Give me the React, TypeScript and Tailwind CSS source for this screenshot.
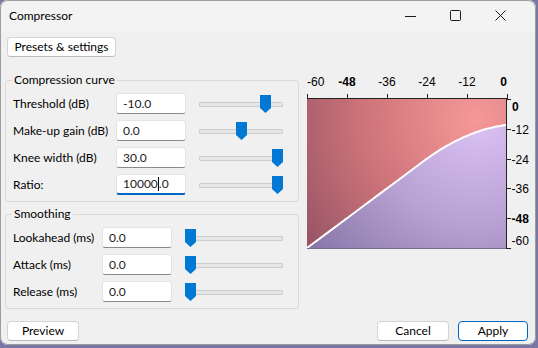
import React from "react"

const curveRows = [
  { label: "Threshold (dB)", value: "-10.0", pos: 0.84 },
  { label: "Make-up gain (dB)", value: "0.0", pos: 0.51 },
  { label: "Knee width (dB)", value: "30.0", pos: 1 },
  { label: "Ratio:", value: "10000.0", pos: 1, focused: true },
]

const smoothingRows = [
  { label: "Lookahead (ms)", value: "0.0", pos: 0 },
  { label: "Attack (ms)", value: "0.0", pos: 0 },
  { label: "Release (ms)", value: "0.0", pos: 0 },
]

// plot mapping, svg origin sits at window (300, 72)
const toX = (db: number) => 7 + ((db + 60) * 200) / 60
const toY = (db: number) => 27 + (-db * 149) / 60

function outDb(x: number) {
  const t = -10
  const w = 30
  if (x < t - w / 2) return x
  return x - (x - t + w / 2) ** 2 / (2 * w)
}

const curve: [number, number][] = []
for (let d = -60; d <= 0.001; d += 0.5) curve.push([toX(d), toY(outDb(d))])

function Thumb() {
  return (
    <svg width="11" height="18" viewBox="0 0 11 18">
      <polygon points="0,0 11,0 11,13 5.5,18 0,13" fill="#0078d4" />
    </svg>
  )
}

function Slider({ pos, width }: { pos: number; width: number }) {
  return (
    <div className="relative h-[21px] ml-[13px]" style={{ width }}>
      <div className="absolute left-0 right-0 top-[9px] h-[5px] border border-[#cdcdcd] bg-[#e6e6e6] rounded-[1px]" />
      <div className="absolute top-[2px]" style={{ left: pos * (width - 11) }}>
        <Thumb />
      </div>
    </div>
  )
}

function Field({ value, focused }: { value: string; focused?: boolean }) {
  if (focused) {
    const [a, b] = value.split(".")
    return (
      <div className="h-[21px] w-[70px] bg-white border border-[#e3e3e3] border-b-2 border-b-[#0067c0] rounded-[3px] pl-[6px] flex items-center text-[12px] text-[#1a1a1a]">
        {a}
        <span className="inline-block w-[1px] h-[14px] bg-black" />.{b}
      </div>
    )
  }
  return (
    <div className="h-[21px] w-[70px] bg-white border border-[#e3e3e3] border-b-[#8a8a8a] rounded-[3px] pl-[6px] flex items-center text-[12px] text-[#1a1a1a]">
      {value}
    </div>
  )
}

function Button({ children, width, primary }: { children: React.ReactNode; width: string; primary?: boolean }) {
  return (
    <div
      className={
        "h-[20px] flex items-center justify-center bg-white rounded-[4px] text-[12px] text-black border " +
        width +
        (primary ? " border-[#0067c0]" : " border-[#d3d3d3] border-b-[#bababa]")
      }
    >
      {children}
    </div>
  )
}

function Graph() {
  const upper =
    "7,27 207,27 " +
    [...curve].reverse().map(([x, y]) => `${x.toFixed(1)},${y.toFixed(1)}`).join(" ") +
    " 7,176"
  const lower = curve.map(([x, y]) => `${x.toFixed(1)},${y.toFixed(1)}`).join(" ") + " 207,176 7,176"
  const line = curve.map(([x, y]) => `${x.toFixed(1)},${y.toFixed(1)}`).join(" ")
  const topTicks = [7, 47, 87, 127, 167, 207]
  const rightTicks = [27, 57, 87, 116, 146, 176]
  return (
    <svg width="236" height="183" className="ml-[1px] font-['Liberation_Sans',Arial,sans-serif]">
      <defs>
        <radialGradient id="red" cx="176" cy="46" r="205" gradientUnits="userSpaceOnUse">
          <stop offset="0" stopColor="#f69898" />
          <stop offset="0.55" stopColor="#cd7479" />
          <stop offset="1" stopColor="#9a5667" />
        </radialGradient>
        <radialGradient id="violet" cx="176" cy="46" r="215" gradientUnits="userSpaceOnUse">
          <stop offset="0" stopColor="#dcc3f6" />
          <stop offset="0.5" stopColor="#b7a0d2" />
          <stop offset="1" stopColor="#8673a5" />
        </radialGradient>
      </defs>
      <polygon points={upper} fill="url(#red)" />
      <polygon points={lower} fill="url(#violet)" />
      <polyline points={line} fill="none" stroke="white" strokeWidth="2" />
      <line x1="7" y1="26.5" x2="207" y2="26.5" stroke="#222" />
      <line x1="206.5" y1="26" x2="206.5" y2="176.5" stroke="#222" />
      <line x1="7" y1="176.5" x2="207" y2="176.5" stroke="#7a6a90" />
      {topTicks.map((x) => (
        <line key={x} x1={x + 0.5} y1="22" x2={x + 0.5} y2="27" stroke="#222" />
      ))}
      {rightTicks.map((y) => (
        <line key={y} x1="206" y1={y + 0.5} x2="211" y2={y + 0.5} stroke="#222" />
      ))}
      <g fontSize="12" fill="#000">
        <text x="7" y="14">-60</text>
        <text x="47" y="14" textAnchor="middle" fontWeight="bold">-48</text>
        <text x="87" y="14" textAnchor="middle">-36</text>
        <text x="127" y="14" textAnchor="middle">-24</text>
        <text x="167" y="14" textAnchor="middle">-12</text>
        <text x="207" y="14" textAnchor="end" fontWeight="bold">0</text>
        <text x="212" y="39" fontWeight="bold">0</text>
        <text x="211.5" y="62">-12</text>
        <text x="211.5" y="92">-24</text>
        <text x="211.5" y="121">-36</text>
        <text x="211.5" y="151" fontWeight="bold">-48</text>
        <text x="211.5" y="173">-60</text>
      </g>
    </svg>
  )
}

export default function App() {
  return (
    <div className="w-[538px] h-[348px] bg-[#7a76a3] font-[Lato,'Liberation_Sans',sans-serif]">
      <div className="w-[536px] h-[345px] rounded-[8px] overflow-hidden bg-[#f0f0f0] flex flex-col outline outline-1 -outline-offset-1 outline-[#9c9c9c]">
        {/* title bar */}
        <div className="h-[31px] shrink-0 bg-[#f3f3f4] flex items-center pl-[9px]">
          <span className="text-[12px] text-black">Compressor</span>
          <div className="ml-auto mr-[13px] flex h-full">
            <div className="w-[45px] flex items-center justify-center">
              <svg width="11" height="10">
                <line x1="0" y1="5.5" x2="11" y2="5.5" stroke="#1a1a1a" />
              </svg>
            </div>
            <div className="w-[45px] flex items-center justify-center">
              <svg width="11" height="11">
                <rect x="0.5" y="0.5" width="10" height="10" rx="1" fill="none" stroke="#1a1a1a" />
              </svg>
            </div>
            <div className="w-[45px] flex items-center justify-center">
              <svg width="11" height="11">
                <path d="M0.5 0.5 L10.5 10.5 M10.5 0.5 L0.5 10.5" stroke="#1a1a1a" />
              </svg>
            </div>
          </div>
        </div>

        {/* body */}
        <div className="flex flex-col">
          <div className="mt-[6px] ml-[7px]">
            <Button width="w-[109px]">Presets &amp; settings</Button>
          </div>

          <div className="flex mt-[15px]">
            <div className="ml-[5px] w-[294px] flex flex-col">
              <fieldset className="border border-[#dadada] rounded-[3px] pl-[7px] pt-[5px] pb-[6px]">
                <legend className="ml-[-1px] px-[2px] text-[12px] leading-[16px] text-black">Compression curve</legend>
                <div className="flex flex-col gap-[6px]">
                  {curveRows.map((row) => (
                    <div key={row.label} className="flex items-center h-[21px]">
                      <span className="w-[103px] text-[12px] text-black">{row.label}</span>
                      <Field value={row.value} focused={row.focused} />
                      <Slider pos={row.pos} width={84} />
                    </div>
                  ))}
                </div>
              </fieldset>

              <fieldset className="mt-[4px] border border-[#dadada] rounded-[3px] pl-[7px] pt-[5px] pb-[6px]">
                <legend className="ml-[-1px] px-[2px] text-[12px] leading-[16px] text-black">Smoothing</legend>
                <div className="flex flex-col gap-[6px]">
                  {smoothingRows.map((row) => (
                    <div key={row.label} className="flex items-center h-[21px]">
                      <span className="w-[89px] text-[12px] text-black">{row.label}</span>
                      <Field value={row.value} />
                      <Slider pos={row.pos} width={98} />
                    </div>
                  ))}
                </div>
              </fieldset>
            </div>

            <Graph />
          </div>

          <div className="flex justify-between mt-[12px] pl-[7px] pr-[8px]">
            <Button width="w-[72px]">Preview</Button>
            <div className="flex gap-[9px]">
              <Button width="w-[72px]">Cancel</Button>
              <Button width="w-[70px]" primary>
                Apply
              </Button>
            </div>
          </div>
        </div>
      </div>
    </div>
  )
}
